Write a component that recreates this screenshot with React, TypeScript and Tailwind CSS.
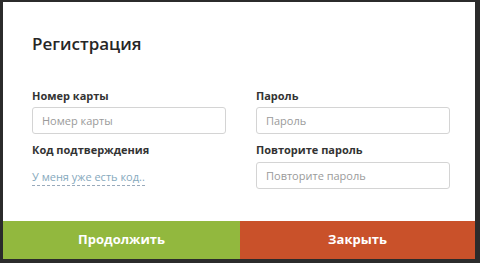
import React from "react";

export default function App() {
  return (
    <div
      className="w-[480px] h-[263px] bg-[#2b2b2b] overflow-hidden pt-[2px] pl-[3px]"
      style={{ fontFamily: '"Open Sans", "Noto Sans", sans-serif' }}
    >
      <div className="w-[472px] bg-white flex flex-col">
        <div className="pl-[29px] pr-[25px] pt-[30px]">
          <h1 className="text-[17px] leading-[24px] font-semibold text-[#262626]">Регистрация</h1>
          <div className="grid grid-cols-2 gap-x-[30px] mt-[32px]">
            <div className="flex flex-col">
              <label className="text-[11px] leading-[16px] font-bold text-[#333]">Номер карты</label>
              <input
                className="mt-[3px] h-[27px] border border-[#d4d4d4] rounded-[3px] px-[9px] text-[11px] text-[#333] placeholder:text-[#9a9a9a] outline-none"
                placeholder="Номер карты"
              />
              <label className="mt-[8px] text-[11px] leading-[16px] font-bold text-[#333]">Код подтверждения</label>
              <div className="mt-[9px] h-[16px] leading-[16px]">
                <span className="text-[11px] text-[#86a9bd] border-b border-dashed border-[#9ab] pb-[1px]">
                  У меня уже есть код..
                </span>
              </div>
            </div>
            <div className="flex flex-col">
              <label className="text-[11px] leading-[16px] font-bold text-[#333]">Пароль</label>
              <input
                type="password"
                className="mt-[3px] h-[27px] border border-[#d4d4d4] rounded-[3px] px-[9px] text-[11px] text-[#333] placeholder:text-[#9a9a9a] outline-none"
                placeholder="Пароль"
              />
              <label className="mt-[8px] text-[11px] leading-[16px] font-bold text-[#333]">Повторите пароль</label>
              <input
                type="password"
                className="mt-[4px] h-[27px] border border-[#d4d4d4] rounded-[3px] px-[9px] text-[11px] text-[#333] placeholder:text-[#9a9a9a] outline-none"
                placeholder="Повторите пароль"
              />
            </div>
          </div>
        </div>
        <div className="mt-[32px] grid grid-cols-[237px_1fr] h-[38px]">
          <button className="bg-[#92b83e] text-white text-[13px] font-bold">Продолжить</button>
          <button className="bg-[#c9512a] text-white text-[13px] font-bold">Закрыть</button>
        </div>
      </div>
    </div>
  );
}
